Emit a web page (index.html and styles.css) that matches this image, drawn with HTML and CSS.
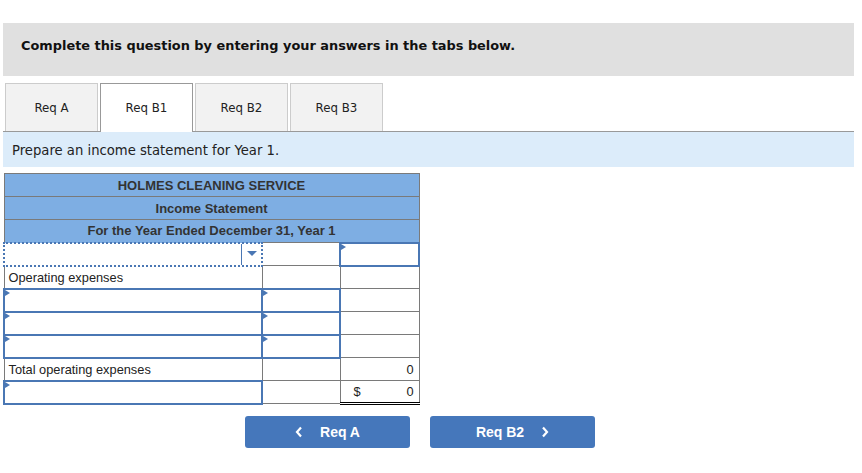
FILE: index.html
```html
<!DOCTYPE html>
<html>
<head>
<meta charset="utf-8">
<link rel="stylesheet" href="styles.css">
</head>
<body>
<div class="page">
  <div class="instructions">Complete this question by entering your answers in the tabs below.</div>
  <div class="tabs">
    <div class="tab">Req A</div>
    <div class="tab active">Req B1</div>
    <div class="tab">Req B2</div>
    <div class="tab">Req B3</div>
  </div>
  <div class="prompt">Prepare an income statement for Year 1.</div>
  <table class="stmt">
    <colgroup>
      <col class="c1">
      <col class="c2">
      <col class="c3">
    </colgroup>
    <tr class="hd"><td colspan="3">HOLMES CLEANING SERVICE</td></tr>
    <tr class="hd"><td colspan="3">Income Statement</td></tr>
    <tr class="hd"><td colspan="3">For the Year Ended December 31, Year 1</td></tr>
    <tr>
      <td class="select"><div class="sel"><span class="selbox"></span><span class="arrow"></span></div></td>
      <td></td>
      <td class="inp"><span class="flag"></span></td>
    </tr>
    <tr>
      <td class="label">Operating expenses</td>
      <td></td>
      <td></td>
    </tr>
    <tr>
      <td class="inp"><span class="flag"></span></td>
      <td class="inp"><span class="flag"></span></td>
      <td></td>
    </tr>
    <tr>
      <td class="inp"><span class="flag"></span></td>
      <td class="inp"><span class="flag"></span></td>
      <td></td>
    </tr>
    <tr>
      <td class="inp"><span class="flag"></span></td>
      <td class="inp"><span class="flag"></span></td>
      <td></td>
    </tr>
    <tr>
      <td class="label">Total operating expenses</td>
      <td></td>
      <td class="num">0</td>
    </tr>
    <tr>
      <td class="inp"><span class="flag"></span></td>
      <td></td>
      <td class="num total"><span class="dollar">$</span>0</td>
    </tr>
  </table>
  <div class="nav">
    <button class="btn prev"><svg class="chev" width="8" height="12" viewBox="0 0 8 12"><path d="M6 1.5 L2 6 L6 10.5" fill="none" stroke="#fff" stroke-width="2.2"/></svg>Req A</button>
    <button class="btn next">Req B2<svg class="chev" width="8" height="12" viewBox="0 0 8 12"><path d="M2 1.5 L6 6 L2 10.5" fill="none" stroke="#fff" stroke-width="2.2"/></svg></button>
  </div>
</div>
</body>
</html>
```

FILE: styles.css
```css
html, body {
  margin: 0;
  padding: 0;
  background: #fff;
}

.page {
  padding: 23px 8px 0 3px;
}

.instructions {
  background: #e0e0e0;
  height: 53px;
  box-sizing: border-box;
  padding: 15px 0 0 18px;
  font-family: "DejaVu Sans", Verdana, sans-serif;
  font-weight: bold;
  font-size: 12.9px;
  color: #111;
}

.tabs {
  display: flex;
  gap: 2px;
  margin-top: 7px;
  padding-left: 2px;
  border-bottom: 1px solid #999;
  height: 48px;
}

.tab {
  width: 93px;
  box-sizing: border-box;
  border: 1px solid #ccc;
  border-bottom: none;
  background: #f2f2f2;
  display: flex;
  align-items: center;
  justify-content: center;
  font-family: "DejaVu Sans", Verdana, sans-serif;
  font-size: 11.8px;
  color: #222;
}

.tab.active {
  background: #fff;
  border-color: #999;
  height: 49px;
  margin-bottom: -1px;
}

.prompt {
  background: #dcecfa;
  height: 35px;
  box-sizing: border-box;
  padding: 11px 0 0 9px;
  font-family: "DejaVu Sans", Verdana, sans-serif;
  font-size: 13.2px;
  color: #222;
}

.stmt {
  margin-top: 6px;
  border-collapse: collapse;
  width: 415px;
  font-family: "Liberation Sans", Arial, sans-serif;
  font-size: 12.8px;
  color: #222;
  table-layout: fixed;
}

.stmt td {
  border: 1px solid #7a7a7a;
  padding: 0;
  height: 23px;
  box-sizing: border-box;
}

.stmt .hd td {
  background: #7eaee3;
  text-align: center;
  font-weight: bold;
  color: #333;
  font-size: 13px;
  height: 23px;
}

.c1 { width: 258px; }
.c2 { width: 78px; }
.c3 { width: 79px; }

.stmt td.label {
  padding-left: 4px;
}

.stmt td.num {
  text-align: right;
  padding-right: 5px;
}

.stmt td.total {
  border-bottom: 3px double #000;
  border-top: 1px solid #000;
}

.dollar {
  float: left;
  padding-left: 13px;
}

.stmt td.inp {
  position: relative;
  border: 2px solid #4a77b4;
}

.flag {
  position: absolute;
  left: 0;
  top: 0;
  width: 0;
  height: 0;
  border-top: 3px solid transparent;
  border-bottom: 3px solid transparent;
  border-left: 5px solid #4a77b4;
}

.stmt td.select {
  border: 2px dotted #4a77b4;
}

.sel {
  display: flex;
  height: 21px;
}

.selbox {
  flex: 1;
  border-right: 1px solid #4a77b4;
}

.arrow {
  width: 19px;
  position: relative;
}

.arrow::after {
  content: "";
  position: absolute;
  left: 5px;
  top: 7px;
  border-left: 5px solid transparent;
  border-right: 5px solid transparent;
  border-top: 5px solid #4a77b4;
}

.nav {
  display: flex;
  gap: 20px;
  margin-top: 11px;
  padding-left: 242px;
}

.btn {
  width: 165px;
  height: 32px;
  background: #4577bb;
  border: none;
  border-radius: 3px;
  color: #fff;
  font-family: "Liberation Sans", Arial, sans-serif;
  font-weight: bold;
  font-size: 14px;
  display: flex;
  align-items: center;
  justify-content: center;
  gap: 17px;
  padding: 0;
}

.chev {
  display: block;
}
```
